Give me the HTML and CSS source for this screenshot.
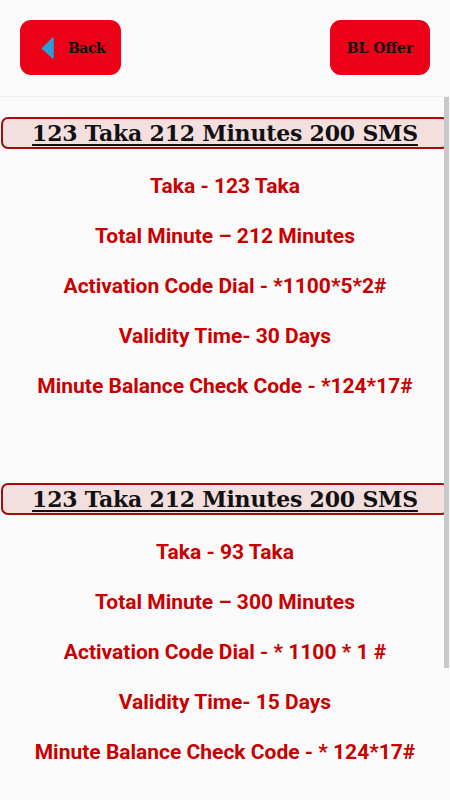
FILE: index.html
```html
<html>
<head>
<title>BL Minute Offer</title>
<link rel="stylesheet" href="styles.css">
</head>
<body>
<div class="top">
  <a href="#" class="btn back">
    <svg class="arr" width="13" height="22" viewBox="0 0 13 22"><path d="M12 1 L12 21 L1.5 11.5 Z" fill="#2a9fd6" stroke="#2a9fd6" stroke-width="1.5" stroke-linejoin="round"/></svg>
    <span>Back</span>
  </a>
  <a href="#" class="btn offer">BL Offer</a>
</div>
<div class="list">
  <div class="pack">
    <div class="head"><u>123 Taka 212 Minutes 200 SMS</u></div>
    <p>Taka - 123 Taka</p>
    <p>Total Minute &ndash; 212 Minutes</p>
    <p>Activation Code Dial - *1100*5*2#</p>
    <p>Validity Time- 30 Days</p>
    <p>Minute Balance Check Code - *124*17#</p>
  </div>
  <div class="pack">
    <div class="head"><u>123 Taka 212 Minutes 200 SMS</u></div>
    <p>Taka - 93 Taka</p>
    <p>Total Minute &ndash; 300 Minutes</p>
    <p>Activation Code Dial - * 1100 * 1 #</p>
    <p>Validity Time- 15 Days</p>
    <p>Minute Balance Check Code - * 124*17#</p>
  </div>
  <div class="thumb"></div>
</div>
</body>
</html>
```

FILE: styles.css
```css
body {margin:0; background-color:#fafafa; font-family:Roboto,"Noto Sans",sans-serif;}
.top {display:flex; justify-content:space-between; padding:20px 20px 20px 20px; height:56px;}
.btn {display:flex; align-items:center; justify-content:center; gap:14px; background-color:#ec0018; border-radius:11px; color:#111; text-decoration:none;
font-family:"DejaVu Serif",serif; font-weight:bold; font-size:14px; height:55px;}
.back {width:101px; justify-content:flex-start; padding-left:21px; box-sizing:border-box; letter-spacing:-0.5px;}
.offer {width:100px;}
.arr {display:block;}
.list {position:relative; border-top:1px solid #f2eeee; height:703px; overflow:hidden;}
.pack {padding-top:20px; height:346px;}
.head {margin:0 1px; border:2px solid #a50a0a; border-radius:7px; background-color:#f4dfdf; text-align:center;
font-family:"DejaVu Serif",serif; font-weight:bold; font-size:22px; line-height:28px; color:#111; letter-spacing:-0.2px;}
.head u {text-decoration-thickness:2px; text-underline-offset:3px;}
.pack p {margin:0; height:50px; line-height:50px; text-align:center; color:#c80000; font-weight:bold; font-size:21px;}
.head + p {margin-top:12px;}
.thumb {position:absolute; right:1px; top:0; width:5px; height:571px; background-color:#c8c8c8;}
```
